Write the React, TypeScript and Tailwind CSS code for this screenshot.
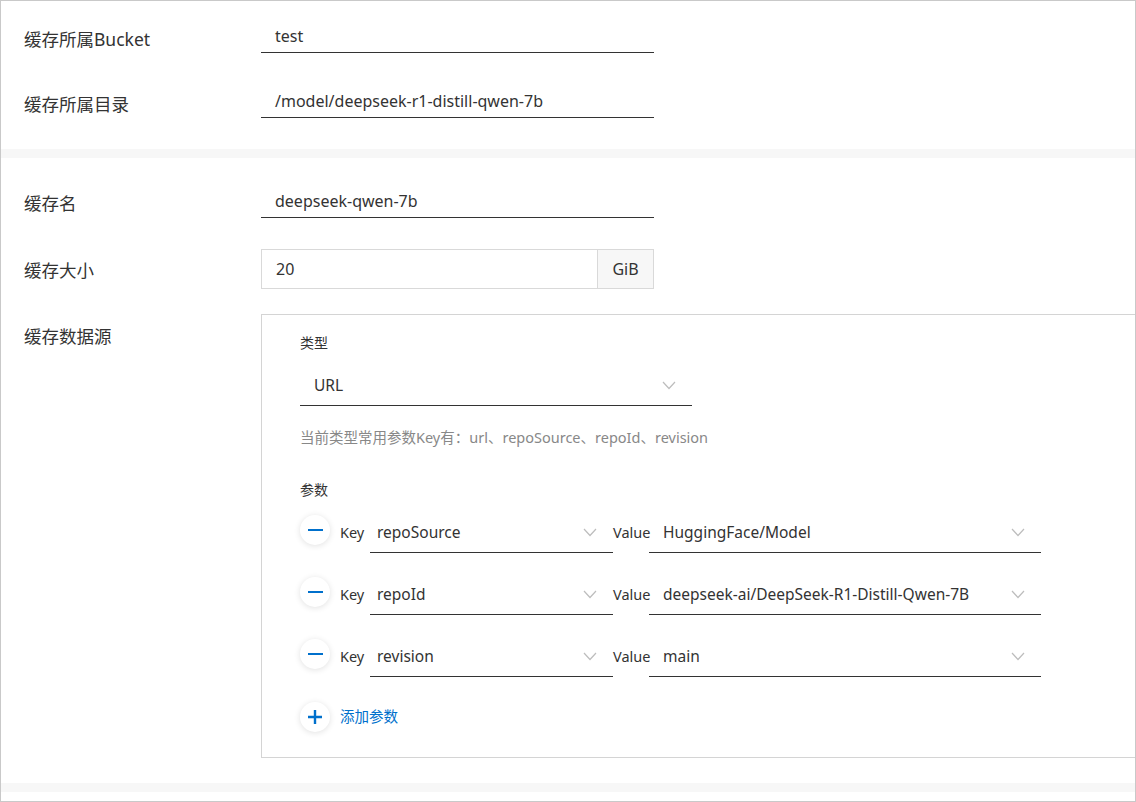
import React from "react";

const font = { fontFamily: '"Noto Sans", "Noto Sans CJK SC", sans-serif' };

const Chevron = ({ className = "" }: { className?: string }) => (
  <svg width="14" height="9" viewBox="0 0 14 9" fill="none" className={className}>
    <path d="M1 1l6 6.5L13 1" stroke="#bdbdbd" strokeWidth="1.2" />
  </svg>
);

const LineInput = ({ value }: { value: string }) => (
  <div className="w-[393px] h-[40px] border-b border-[#333] px-[14px] flex items-center text-[16px] text-[#333] pt-[6px]">
    {value}
  </div>
);

const Select = ({ value, width, pad }: { value: string; width: string; pad: string }) => (
  <div className={`${width} ${pad} h-[40px] border-b border-[#333] flex items-center justify-between pr-[16px] text-[15.5px] text-[#333]`}>
    <span>{value}</span>
    <Chevron />
  </div>
);

const RoundButton = ({ children }: { children: React.ReactNode }) => (
  <div className="w-[30px] h-[30px] rounded-full bg-white shadow-[0_1px_6px_rgba(0,0,0,0.12)] flex items-center justify-center">
    {children}
  </div>
);

const params = [
  { key: "repoSource", value: "HuggingFace/Model" },
  { key: "repoId", value: "deepseek-ai/DeepSeek-R1-Distill-Qwen-7B" },
  { key: "revision", value: "main" },
];

const Label = ({ text, className = "" }: { text: string; className?: string }) => (
  <div className={`w-[237px] shrink-0 text-[17.5px] text-[#333] ${className}`}>{text}</div>
);

export default function App() {
  return (
    <div style={font} className="w-[1136px] h-[802px] bg-white border border-[#c9c9c9] flex flex-col overflow-hidden">
      {/* bucket / directory */}
      <div className="pl-[23px] pt-[12px] h-[148px] flex flex-col gap-[25px]">
        <div className="flex items-center">
          <Label text="缓存所属Bucket" className="pt-[13px]" />
          <LineInput value="test" />
        </div>
        <div className="flex items-center">
          <Label text="缓存所属目录" className="pt-[12px]" />
          <LineInput value="/model/deepseek-r1-distill-qwen-7b" />
        </div>
      </div>

      <div className="h-[9px] bg-[#f7f7f7]" />

      {/* cache settings */}
      <div className="pl-[23px] pt-[20px] flex flex-col">
        <div className="flex items-center">
          <Label text="缓存名" className="pt-[10px]" />
          <LineInput value="deepseek-qwen-7b" />
        </div>

        <div className="flex items-center mt-[31px]">
          <Label text="缓存大小" className="pt-[2px]" />
          <div className="w-[393px] h-[40px] border border-[#d9d9d9] flex text-[16px] text-[#333]">
            <div className="flex-1 flex items-center px-[14px]">20</div>
            <div className="w-[56px] border-l border-[#d9d9d9] bg-[#f7f7f7] flex items-center justify-center">GiB</div>
          </div>
        </div>

        <div className="flex mt-[25px]">
          <Label text="缓存数据源" className="pt-[9px]" />
          <div className="flex-1 h-[444px] border border-r-0 border-[#d4d4d4] pl-[38px] pt-[17px]">
            <div className="text-[14px] text-[#333]">类型</div>
            <div className="mt-[13px]">
              <Select value="URL" width="w-[392px]" pad="pl-[14px]" />
            </div>
            <div className="mt-[21px] text-[14.5px] text-[#888]">当前类型常用参数Key有：url、repoSource、repoId、revision</div>

            <div className="mt-[30px] text-[14px] text-[#333]">参数</div>
            <div className="mt-[13px] flex flex-col gap-[22px]">
              {params.map((p) => (
                <div key={p.key} className="flex items-center">
                  <div className="w-[40px] pb-[5px]">
                    <RoundButton>
                      <span className="block w-[15px] h-[2px] bg-[#0070cc]" />
                    </RoundButton>
                  </div>
                  <span className="w-[30px] text-[14.5px] text-[#333]">Key</span>
                  <Select value={p.key} width="w-[243px]" pad="pl-[7px]" />
                  <span className="w-[36px] text-[14.5px] text-[#333]">Value</span>
                  <Select value={p.value} width="w-[392px]" pad="pl-[14px]" />
                </div>
              ))}
            </div>

            <div className="mt-[25px] flex items-center">
              <div className="w-[40px]">
                <RoundButton>
                  <svg width="14" height="14" viewBox="0 0 14 14">
                    <path d="M7 0v14M0 7h14" stroke="#0070cc" strokeWidth="2.4" />
                  </svg>
                </RoundButton>
              </div>
              <span className="text-[14.5px] text-[#0070cc]">添加参数</span>
            </div>
          </div>
        </div>
      </div>

      <div className="mt-[25px] h-[9px] bg-[#f7f7f7]" />
    </div>
  );
}
